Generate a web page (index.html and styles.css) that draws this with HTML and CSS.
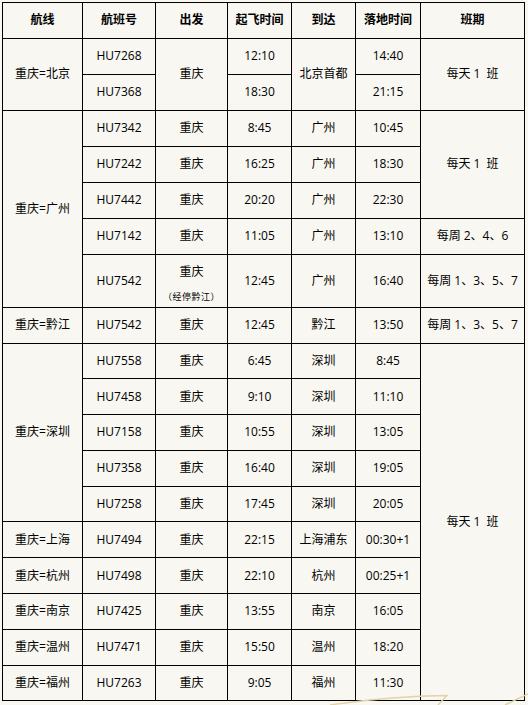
FILE: index.html
```html
<!DOCTYPE html>
<html lang="zh-CN">
<head>
<meta charset="utf-8">
<title>航班时刻表</title>
<link rel="stylesheet" href="styles.css">
</head>
<body>
<div class="page">
  <table class="schedule">
    <colgroup>
      <col class="c-route"><col class="c-no"><col class="c-dep"><col class="c-time"><col class="c-arr"><col class="c-land"><col class="c-days">
    </colgroup>
    <thead>
      <tr class="head">
        <th>航线</th><th>航班号</th><th>出发</th><th>起飞时间</th><th>到达</th><th>落地时间</th><th>班期</th>
      </tr>
    </thead>
    <tbody>
      <tr class="r">
        <td rowspan="2">重庆=北京</td><td>HU7268</td><td rowspan="2">重庆</td><td>12:10</td><td rowspan="2">北京首都</td><td>14:40</td><td rowspan="2">每天 1&nbsp; 班</td>
      </tr>
      <tr class="r"><td>HU7368</td><td>18:30</td><td>21:15</td></tr>

      <tr class="r">
        <td rowspan="5">重庆=广州</td><td>HU7342</td><td>重庆</td><td>8:45</td><td>广州</td><td>10:45</td><td rowspan="3">每天 1&nbsp; 班</td>
      </tr>
      <tr class="r"><td>HU7242</td><td>重庆</td><td>16:25</td><td>广州</td><td>18:30</td></tr>
      <tr class="r"><td>HU7442</td><td>重庆</td><td>20:20</td><td>广州</td><td>22:30</td></tr>
      <tr class="r"><td>HU7142</td><td>重庆</td><td>11:05</td><td>广州</td><td>13:10</td><td>每周 2、4、6</td></tr>
      <tr class="r-double">
        <td>HU7542</td><td><span class="stop">重庆</span><span class="note">（经停黔江）</span></td><td>12:45</td><td>广州</td><td>16:40</td><td>每周 1、3、5、7</td>
      </tr>

      <tr class="r"><td>重庆=黔江</td><td>HU7542</td><td>重庆</td><td>12:45</td><td>黔江</td><td>13:50</td><td>每周 1、3、5、7</td></tr>

      <tr class="s">
        <td rowspan="5">重庆=深圳</td><td>HU7558</td><td>重庆</td><td>6:45</td><td>深圳</td><td>8:45</td><td rowspan="10">每天 1&nbsp; 班</td>
      </tr>
      <tr class="s"><td>HU7458</td><td>重庆</td><td>9:10</td><td>深圳</td><td>11:10</td></tr>
      <tr class="s"><td>HU7158</td><td>重庆</td><td>10:55</td><td>深圳</td><td>13:05</td></tr>
      <tr class="s"><td>HU7358</td><td>重庆</td><td>16:40</td><td>深圳</td><td>19:05</td></tr>
      <tr class="s"><td>HU7258</td><td>重庆</td><td>17:45</td><td>深圳</td><td>20:05</td></tr>
      <tr class="s"><td>重庆=上海</td><td>HU7494</td><td>重庆</td><td>22:15</td><td>上海浦东</td><td>00:30+1</td></tr>
      <tr class="s"><td>重庆=杭州</td><td>HU7498</td><td>重庆</td><td>22:10</td><td>杭州</td><td>00:25+1</td></tr>
      <tr class="s"><td>重庆=南京</td><td>HU7425</td><td>重庆</td><td>13:55</td><td>南京</td><td>16:05</td></tr>
      <tr class="s"><td>重庆=温州</td><td>HU7471</td><td>重庆</td><td>15:50</td><td>温州</td><td>18:20</td></tr>
      <tr class="s"><td>重庆=福州</td><td>HU7263</td><td>重庆</td><td>9:05</td><td>福州</td><td>11:30</td></tr>
    </tbody>
  </table>
  <svg class="swoosh" width="528" height="14" viewBox="0 0 528 14" aria-hidden="true">
    <path d="M330 14 Q390 5 447 4.5 L438 14" fill="none" stroke="#e3d2a6" stroke-width="1.4"/>
    <path d="M505 14 L528 3" fill="none" stroke="#e3d2a6" stroke-width="1.4"/>
  </svg>
</div>
</body>
</html>
```
FILE: styles.css
```css
html, body {
  margin: 0;
  padding: 0;
  background: #f8f7f2;
}

body {
  font-family: "Open Sans", "Noto Sans CJK SC", "Microsoft YaHei", sans-serif;
  font-size: 12px;
  color: #000;
}

.page {
  position: relative;
  width: 528px;
  height: 705px;
  overflow: hidden;
  padding: 2px 0 0 2px;
  box-sizing: border-box;
}

.schedule {
  border-collapse: collapse;
  table-layout: fixed;
  width: 523px;
}

.c-route { width: 80px; }
.c-no { width: 73px; }
.c-dep { width: 72px; }
.c-time { width: 64px; }
.c-arr { width: 64px; }
.c-land { width: 65px; }
.c-days { width: 104px; }

.schedule th,
.schedule td {
  border: 1px solid #000;
  padding: 0;
  text-align: center;
  vertical-align: middle;
  line-height: 16px;
  white-space: nowrap;
}

.schedule th {
  font-weight: bold;
}

.head { height: 35.5px; }
.r { height: 36px; }
.r-double { height: 53px; }
.s { height: 35.8px; }

.stop {
  display: block;
  line-height: 32px;
}

.note {
  display: block;
  font-size: 9px;
  line-height: 18px;
  letter-spacing: 0.5px;
}

.swoosh {
  position: absolute;
  left: 0;
  bottom: 0;
}
```
